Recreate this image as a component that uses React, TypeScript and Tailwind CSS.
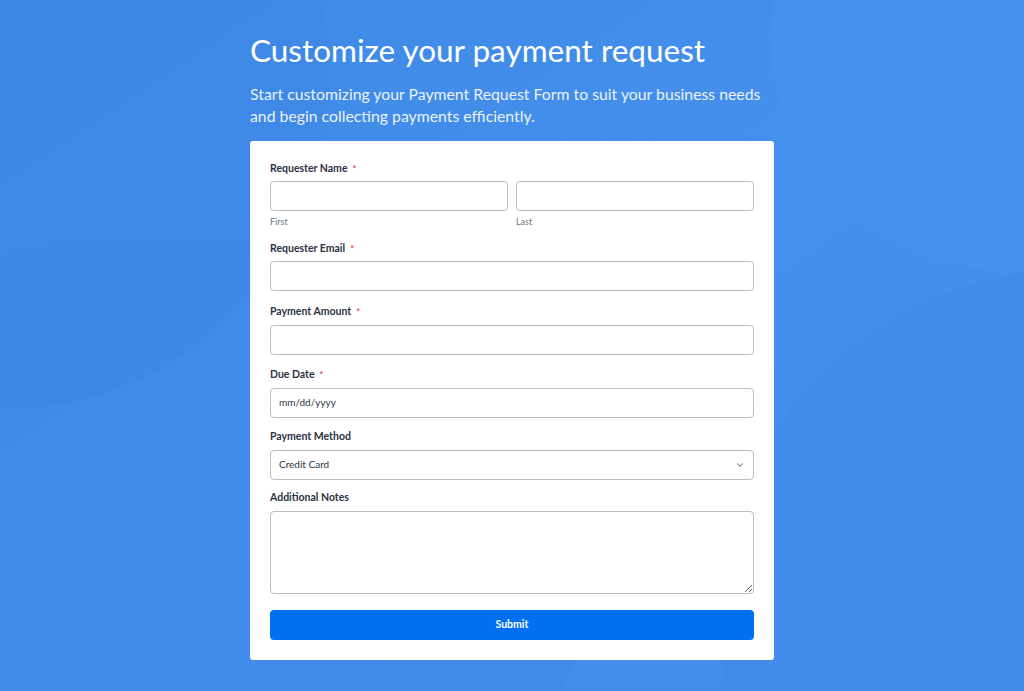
import { ChevronDown } from 'lucide-react';

const font = { fontFamily: 'Lato, "Noto Sans", sans-serif' };

function Label({ text, required }: { text: string; required?: boolean }) {
  return (
    <div className="flex items-center h-[14px] text-[10.5px] font-bold text-[#2c3345] leading-none">
      {text}
      {required && <span className="ml-[5px] text-[#e5484d] text-[9px]">*</span>}
    </div>
  );
}

const inputCls =
  'w-full h-[30px] rounded-[4px] border border-[#b8bdc9] bg-white px-2 text-[10px] text-[#2c3345] outline-none';

export default function App() {
  return (
    <div className="relative min-h-[691px] w-full overflow-hidden bg-gradient-to-br from-[#3f88e6] via-[#4590ec] to-[#438cea]" style={font}>
      {/* background decoration */}
      <div className="absolute -left-[330px] -top-[250px] w-[660px] h-[660px] rounded-full bg-[#3b84e3]/40" />
      <div className="absolute left-[770px] -top-[200px] w-[600px] h-[470px] rounded-full bg-[#4893ef]/40" />
      <div className="absolute left-[720px] top-[270px] w-[900px] h-[700px] rounded-full bg-[#3f88e6]/30" />
      <div className="absolute -left-[200px] top-[240px] w-[800px] h-[600px] rounded-full bg-[#3c86e5]/30" />

      <div className="relative mx-auto w-[524px] pt-[30px] pb-[31px]">
        <h1 className="text-[31.5px] leading-[40px] font-normal text-white">
          Customize your payment request
        </h1>
        <p className="mt-[13px] text-[15.8px] leading-[22px] text-[#eaf2fd]">
          Start customizing your Payment Request Form to suit your business needs and begin collecting payments efficiently.
        </p>

        <div className="mt-[14px] rounded-[3px] bg-white px-5 pt-[20px] pb-5">
          <Label text="Requester Name" required />
          <div className="mt-[6px] grid grid-cols-2 gap-2">
            <div>
              <input className={inputCls} />
              <div className="mt-[4px] text-[9px] text-[#6f7687]">First</div>
            </div>
            <div>
              <input className={inputCls} />
              <div className="mt-[4px] text-[9px] text-[#6f7687]">Last</div>
            </div>
          </div>

          <div className="mt-[13px]">
            <Label text="Requester Email" required />
            <input className={`${inputCls} mt-[5px]`} />
          </div>

          <div className="mt-[14px]">
            <Label text="Payment Amount" required />
            <input className={`${inputCls} mt-[6px]`} />
          </div>

          <div className="mt-[13px]">
            <Label text="Due Date" required />
            <div className={`${inputCls} mt-[6px] flex items-center`}>mm/dd/yyyy</div>
          </div>

          <div className="mt-[12px]">
            <Label text="Payment Method" />
            <div className={`${inputCls} mt-[6px] flex items-center justify-between`}>
              <span>Credit Card</span>
              <ChevronDown size={10} strokeWidth={2.5} className="text-[#6f7687]" />
            </div>
          </div>

          <div className="mt-[11px]">
            <Label text="Additional Notes" />
            <textarea className="mt-[6px] block w-full h-[83px] rounded-[4px] border border-[#b8bdc9] bg-white px-2 py-1 text-[10px] outline-none" />
          </div>

          <button className="mt-[16px] w-full h-[30px] rounded-[4px] bg-[#0070f0] text-white text-[10.5px] font-bold">
            Submit
          </button>
        </div>
      </div>
    </div>
  );
}
